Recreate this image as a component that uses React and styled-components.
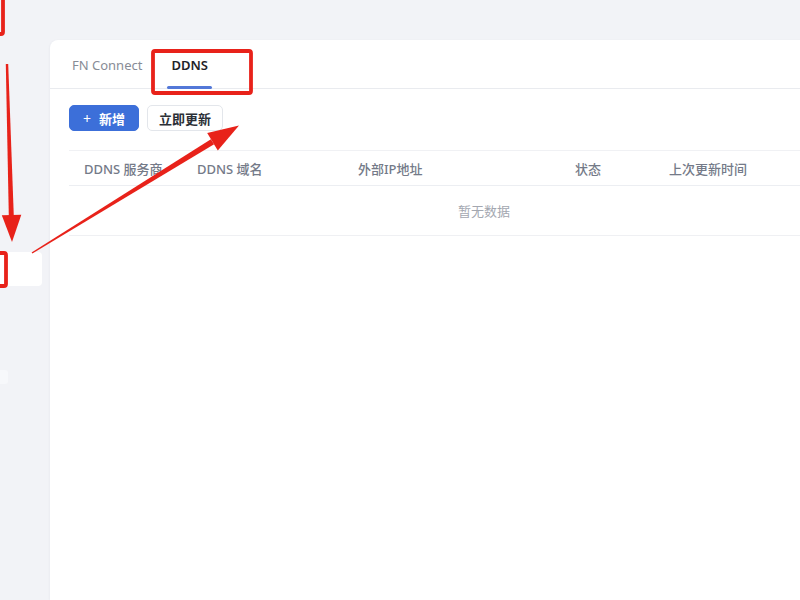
import styled, { createGlobalStyle } from 'styled-components';

const GlobalStyle = createGlobalStyle`
  html, body {
    margin: 0;
    padding: 0;
    width: 800px;
    height: 600px;
    overflow: hidden;
    background: #f2f3f7;
    font-family: 'Noto Sans', 'Noto Sans CJK SC', sans-serif;
  }
`;

const columns = [
  { key: 'provider', title: 'DDNS 服务商', width: 113 },
  { key: 'domain', title: 'DDNS 域名', width: 161 },
  { key: 'ip', title: '外部IP地址', width: 217 },
  { key: 'status', title: '状态', width: 94 },
  { key: 'updated', title: '上次更新时间', width: 245 },
];

const App = () => {
  return (
    <Page>
      <GlobalStyle />
      <Sidebar>
        <SideItem />
        <SideGhost />
      </Sidebar>
      <Main>
        <Card>
          <TabBar>
            <Tab>FN Connect</Tab>
            <Tab active>DDNS</Tab>
          </TabBar>
          <Body>
            <Toolbar>
              <Button primary>
                <span className='plus'>+</span> 新增
              </Button>
              <Button>立即更新</Button>
            </Toolbar>
            <Table>
              <HeadRow>
                {columns.map((col) => (
                  <HeadCell key={col.key} style={{ width: col.width }}>
                    {col.title}
                  </HeadCell>
                ))}
              </HeadRow>
              <EmptyRow>暂无数据</EmptyRow>
            </Table>
          </Body>
        </Card>
      </Main>
      <Marks />
    </Page>
  );
};

// red annotations drawn over the screenshot
const Marks = () => (
  <Overlay viewBox='0 0 800 600' width='800' height='600'>
    <g fill='none' stroke='#e8221a' strokeWidth='3.8' strokeLinejoin='round'>
      <rect x='-20' y='-20' width='23' height='54' rx='2' />
      <rect x='153' y='51' width='98' height='42' rx='2' />
      <rect x='-20' y='253' width='26' height='33' rx='2' />
    </g>
    <g fill='#e8221a'>
      <polygon points='5.8,64 8.2,64 13.8,216 8.8,216' />
      <polygon points='12,242 1.8,215.3 21.3,214.7' />
      <polygon points='32.4,253.6 31.6,252.4 210.9,139.3 214.1,144.2' />
      <polygon points='239,125.5 217.8,150.5 207.2,133.1' />
    </g>
  </Overlay>
);

export default App;

const Page = styled.div`
  position: relative;
  display: flex;
  width: 800px;
  height: 600px;
  overflow: hidden;
`;

const Sidebar = styled.div`
  width: 50px;
  flex-shrink: 0;
  padding-top: 252px;
  display: flex;
  flex-direction: column;
  box-sizing: border-box;
`;

const SideItem = styled.div`
  width: 42px;
  height: 34px;
  background: #ffffff;
  border-radius: 0 4px 4px 0;
`;

const SideGhost = styled.div`
  margin-top: 84px;
  width: 8px;
  height: 14px;
  background: #f7f8fb;
  border-radius: 0 3px 3px 0;
`;

const Main = styled.div`
  flex: 1;
  padding-top: 40px;
  min-width: 0;
`;

const Card = styled.div`
  width: 900px;
  height: 560px;
  background: #ffffff;
  border-radius: 8px 0 0 0;
  box-shadow: -1px 0 2px rgba(30, 40, 70, 0.03);
`;

const TabBar = styled.div`
  display: flex;
  gap: 21px;
  height: 49px;
  padding-left: 22px;
  border-bottom: 1px solid #e9ebef;
  box-sizing: border-box;
`;

const Tab = styled.div`
  position: relative;
  display: flex;
  align-items: center;
  padding: 2px 4px 0;
  margin-left: ${(p) => (p.active ? '0' : '-4px')};
  font-size: 13px;
  font-weight: ${(p) => (p.active ? 600 : 400)};
  color: ${(p) => (p.active ? '#1f2329' : '#878c96')};

  &:after {
    content: '';
    display: ${(p) => (p.active ? 'block' : 'none')};
    position: absolute;
    left: 0;
    right: 0;
    bottom: -1px;
    height: 3px;
    background: #5378d8;
    border-radius: 2px;
  }
`;

const Body = styled.div`
  padding: 16px 0 0 19px;
`;

const Toolbar = styled.div`
  display: flex;
  align-items: center;
  gap: 8px;
  margin-bottom: 19px;
`;

const Button = styled.button`
  display: inline-flex;
  align-items: center;
  justify-content: center;
  gap: 6px;
  height: 26px;
  padding: 0 ${(p) => (p.primary ? '13px' : '10px')};
  min-width: ${(p) => (p.primary ? '69px' : '76px')};
  font-family: inherit;
  font-size: 13px;
  font-weight: 600;
  border-radius: 5px;
  cursor: pointer;
  box-sizing: border-box;
  color: ${(p) => (p.primary ? '#ffffff' : '#2b2f36')};
  background: ${(p) => (p.primary ? '#3c6fd9' : '#ffffff')};
  border: 1px solid ${(p) => (p.primary ? '#3c6fd9' : '#e3e6eb')};

  .plus {
    font-weight: 400;
    font-size: 14px;
    margin-right: 2px;
  }
`;

const Table = styled.div`
  width: 830px;
  border-top: 1px solid #f0f1f4;
`;

const HeadRow = styled.div`
  display: flex;
  height: 34px;
  border-bottom: 1px solid #eceef2;
`;

const HeadCell = styled.div`
  display: flex;
  align-items: center;
  padding-left: 15px;
  box-sizing: border-box;
  font-size: 13px;
  font-weight: 500;
  color: #747a88;
  white-space: nowrap;
`;

const EmptyRow = styled.div`
  display: flex;
  align-items: center;
  justify-content: center;
  height: 49px;
  border-bottom: 1px solid #eff0f3;
  font-size: 13px;
  color: #a3a7b0;
`;

const Overlay = styled.svg`
  position: absolute;
  left: 0;
  top: 0;
  pointer-events: none;
`;
